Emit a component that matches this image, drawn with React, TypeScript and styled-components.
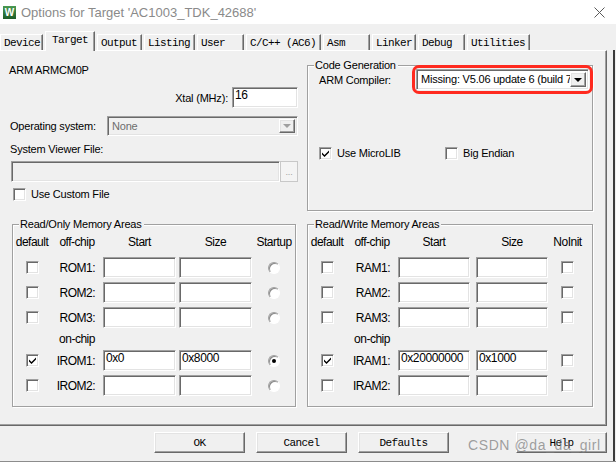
import React from 'react';
import styled, { createGlobalStyle } from 'styled-components';

type MemRow = { name: string; start?: string; size?: string; def?: boolean; flag?: boolean };

const TABS = [
  { label: 'Device', width: 43 },
  { label: 'Target', width: 50 },
  { label: 'Output', width: 45 },
  { label: 'Listing', width: 51 },
  { label: 'User', width: 47 },
  { label: 'C/C++ (AC6)', width: 75 },
  { label: 'Asm', width: 47 },
  { label: 'Linker', width: 44 },
  { label: 'Debug', width: 47 },
  { label: 'Utilities', width: 63 },
];
const ACTIVE_TAB = 1;

const ROM_OFF: MemRow[] = [{ name: 'ROM1' }, { name: 'ROM2' }, { name: 'ROM3' }];
const ROM_ON: MemRow[] = [
  { name: 'IROM1', start: '0x0', size: '0x8000', def: true, flag: true },
  { name: 'IROM2' },
];
const RAM_OFF: MemRow[] = [{ name: 'RAM1' }, { name: 'RAM2' }, { name: 'RAM3' }];
const RAM_ON: MemRow[] = [
  { name: 'IRAM1', start: '0x20000000', size: '0x1000', def: true },
  { name: 'IRAM2' },
];

const GlobalStyle = createGlobalStyle`
  html, body {
    margin: 0;
    padding: 0;
    background: #ffffff;
  }
`;

function CheckBox({ on }: { on?: boolean }) {
  return (
    <Box>
      {on && (
        <svg width='7' height='7' viewBox='0 0 7 7'>
          <path d='M0 2.5 L2.5 5 L7 0.5 L7 2.5 L2.5 7 L0 4.5 Z' fill='#000' />
        </svg>
      )}
    </Box>
  );
}

interface MemoryGroupProps {
  title: string;
  last: string;
  cols: string;
  fieldWidth: number;
  radio?: boolean;
  offChip: MemRow[];
  onChip: MemRow[];
}

function MemoryGroup({ title, last, cols, fieldWidth, radio, offChip, onChip }: MemoryGroupProps) {
  const renderRow = (row: MemRow) => (
    <React.Fragment key={row.name}>
      <Cell>
        <CheckBox on={row.def} />
      </Cell>
      <RowLabel>{row.name}:</RowLabel>
      <Field $w={fieldWidth}>{row.start}</Field>
      <Field $w={fieldWidth}>{row.size}</Field>
      <Cell>{radio ? <Radio $on={row.flag} /> : <CheckBox on={row.flag} />}</Cell>
    </React.Fragment>
  );

  return (
    <Group $h={183}>
      <Legend>{title}</Legend>
      <MemGrid $cols={cols}>
        <Head>default</Head>
        <Head>off-chip</Head>
        <Head $w={fieldWidth}>Start</Head>
        <Head $w={fieldWidth}>Size</Head>
        <Head>{last}</Head>
        {offChip.map(renderRow)}
        <span />
        <Head>on-chip</Head>
        <span />
        <span />
        <span />
        {onChip.map(renderRow)}
      </MemGrid>
    </Group>
  );
}

function App() {
  return (
    <>
      <GlobalStyle />
      <Window>
        <TitleBar>
          <AppIcon>W</AppIcon>
          <TitleText>Options for Target 'AC1003_TDK_42688'</TitleText>
          <CloseIcon width='11' height='11' viewBox='0 0 11 11'>
            <path d='M0.5 0.5 L10.5 10.5 M10.5 0.5 L0.5 10.5' stroke='#5a5a5a' strokeWidth='1' fill='none' />
          </CloseIcon>
        </TitleBar>

        <TabStrip>
          {TABS.map((tab, i) => (
            <Tab key={tab.label} $w={tab.width} $active={i === ACTIVE_TAB}>
              {tab.label}
            </Tab>
          ))}
        </TabStrip>

        <Body>
          <Pane>
            <TopSection>
              <LeftCol>
                <DeviceName>ARM ARMCM0P</DeviceName>
                <XtalRow>
                  <span>Xtal (MHz):</span>
                  <Field $w={66}>16</Field>
                </XtalRow>
                <OsRow>
                  <span>Operating system:</span>
                  <DropDown $w={191} $h={20} $disabled>
                    <DropValue>None</DropValue>
                    <DropArrow $disabled />
                  </DropDown>
                </OsRow>
                <FieldLabel>System Viewer File:</FieldLabel>
                <PathRow>
                  <Field $disabled $grow />
                  <BrowseButton>...</BrowseButton>
                </PathRow>
                <CheckRow $pad={4}>
                  <CheckBox />
                  <span>Use Custom File</span>
                </CheckRow>
              </LeftCol>

              <Group $h={146} $top={2}>
                <Legend>Code Generation</Legend>
                <CompilerRow>
                  <span>ARM Compiler:</span>
                  <Highlight>
                    <DropDown $w={173} $h={21}>
                      <DropValue>Missing: V5.06 update 6 (build 750)</DropValue>
                      <DropArrow />
                    </DropDown>
                  </Highlight>
                </CompilerRow>
                <OptionsRow>
                  <CheckRow>
                    <CheckBox on />
                    <span>Use MicroLIB</span>
                  </CheckRow>
                  <CheckRow>
                    <CheckBox />
                    <span>Big Endian</span>
                  </CheckRow>
                </OptionsRow>
              </Group>
            </TopSection>

            <MemSection>
              <MemoryGroup
                title='Read/Only Memory Areas'
                last='Startup'
                cols='38px 52px 76px 76px 38px'
                fieldWidth={73}
                radio
                offChip={ROM_OFF}
                onChip={ROM_ON}
              />
              <MemoryGroup
                title='Read/Write Memory Areas'
                last='NoInit'
                cols='38px 52px 78px 76px 31px'
                fieldWidth={72}
                offChip={RAM_OFF}
                onChip={RAM_ON}
              />
            </MemSection>
          </Pane>

          <ButtonRow>
            <DlgButton>OK</DlgButton>
            <DlgButton>Cancel</DlgButton>
            <DlgButton>Defaults</DlgButton>
            <DlgButton $push>Help</DlgButton>
          </ButtonRow>
        </Body>

        <Watermark>CSDN @da_da_girl</Watermark>
      </Window>
    </>
  );
}

export default App;

const sunken = `
  border: 1px solid;
  border-color: #a0a0a0 #ffffff #ffffff #a0a0a0;
  box-shadow: inset 1px 1px 0 #696969, inset -1px -1px 0 #e3e3e3;
`;

const raised = `
  border: 1px solid;
  border-color: #ffffff #696969 #696969 #ffffff;
  box-shadow: inset -1px -1px 0 #a0a0a0, inset 1px 1px 0 #e3e3e3;
`;

const Window = styled.div`
  position: relative;
  width: 616px;
  height: 462px;
  box-sizing: border-box;
  border-bottom: 1px solid #8c8c8c;
  background: #f0f0f0;
  display: flex;
  flex-direction: column;
  overflow: hidden;
  font-family: 'Liberation Sans', Arial, sans-serif;
  font-size: 11px;
  letter-spacing: -0.2px;
  color: #000;
`;

const TitleBar = styled.div`
  flex: none;
  height: 24px;
  background: #ffffff;
  display: flex;
  align-items: center;
  padding-left: 3px;
`;

const AppIcon = styled.span`
  width: 13px;
  height: 13px;
  background: linear-gradient(#4a9a52, #1d5c28);
  color: #ffffff;
  font: bold 10px 'Liberation Sans', sans-serif;
  letter-spacing: 0;
  display: flex;
  align-items: center;
  justify-content: center;
`;

const TitleText = styled.span`
  margin-left: 5px;
  font-size: 13px;
  letter-spacing: 0;
  color: #8a8a8a;
`;

const CloseIcon = styled.svg`
  margin-left: auto;
  margin-right: 11px;
`;

const TabStrip = styled.div`
  flex: none;
  height: 26px;
  display: flex;
  align-items: flex-end;
  gap: 2px;
`;

const Tab = styled.div<{ $w: number; $active?: boolean }>`
  position: relative;
  z-index: ${({ $active }) => ($active ? 1 : 0)};
  width: ${({ $w }) => $w}px;
  height: ${({ $active }) => ($active ? 20 : 16)}px;
  margin-bottom: ${({ $active }) => ($active ? -1 : 0)}px;
  box-sizing: border-box;
  padding: ${({ $active }) => ($active ? '2px 0 0 6px' : '2px 0 0 3px')};
  background: #f0f0f0;
  border-top: 1px solid #ffffff;
  border-left: 1px solid #ffffff;
  border-right: 1px solid #696969;
  box-shadow: inset -1px 0 0 #a0a0a0;
  font-family: 'Liberation Mono', 'Courier New', monospace;
  font-size: 11px;
  letter-spacing: -0.6px;
  line-height: 13px;
  white-space: nowrap;
`;

const Body = styled.div`
  flex: 1;
  width: 615px;
  box-sizing: border-box;
  border-right: 2px solid #3c3c3c;
  display: flex;
  flex-direction: column;
`;

const Pane = styled.div`
  width: 607px;
  height: 376px;
  box-sizing: border-box;
  border-top: 1px solid #ffffff;
  border-right: 1px solid #696969;
  border-bottom: 1px solid #696969;
  box-shadow: inset -1px -1px 0 #a0a0a0;
  padding: 12px 13px 0 9px;
`;

const TopSection = styled.div`
  display: grid;
  grid-template-columns: 289px 286px;
  column-gap: 9px;
  align-items: start;
`;

const LeftCol = styled.div`
  display: flex;
  flex-direction: column;
`;

const DeviceName = styled.div`
  line-height: 14px;
`;

const XtalRow = styled.div`
  margin-top: 10px;
  display: flex;
  justify-content: flex-end;
  align-items: center;
  gap: 4px;
`;

const OsRow = styled.div`
  margin-top: 8px;
  display: flex;
  align-items: center;
  justify-content: space-between;
  padding-left: 1px;
`;

const FieldLabel = styled.div`
  margin-top: 6px;
  padding-left: 1px;
  line-height: 14px;
`;

const PathRow = styled.div`
  margin-top: 5px;
  display: flex;
  padding-left: 2px;
`;

const CheckRow = styled.div<{ $pad?: number }>`
  margin-top: ${({ $pad }) => ($pad ? 5 : 0)}px;
  padding-left: ${({ $pad }) => $pad ?? 0}px;
  display: flex;
  align-items: center;
  gap: 5px;
  line-height: 14px;
`;

const Field = styled.div<{ $w?: number; $disabled?: boolean; $grow?: boolean }>`
  ${sunken}
  flex: ${({ $grow }) => ($grow ? 1 : 'none')};
  width: ${({ $w }) => ($w ? `${$w}px` : 'auto')};
  height: 21px;
  box-sizing: border-box;
  padding: 1px 2px 0 2px;
  background: ${({ $disabled }) => ($disabled ? '#f0f0f0' : '#ffffff')};
  font-size: 12px;
  letter-spacing: -0.4px;
  line-height: 13px;
  white-space: nowrap;
  overflow: hidden;
`;

const BrowseButton = styled.div`
  width: 18px;
  height: 21px;
  box-sizing: border-box;
  border: 1px solid #c8c8c8;
  background: #f4f4f4;
  color: #a0a0a0;
  font-size: 9px;
  display: flex;
  align-items: flex-end;
  justify-content: center;
  padding-bottom: 4px;
`;

const DropDown = styled.div<{ $w: number; $h: number; $disabled?: boolean }>`
  ${sunken}
  width: ${({ $w }) => $w}px;
  height: ${({ $h }) => $h}px;
  box-sizing: border-box;
  display: flex;
  padding: 2px;
  background: ${({ $disabled }) => ($disabled ? '#f0f0f0' : '#ffffff')};
  color: ${({ $disabled }) => ($disabled ? '#6d6d6d' : '#000000')};
`;

const DropValue = styled.span`
  flex: 1;
  padding-left: 2px;
  line-height: 15px;
  white-space: nowrap;
  overflow: hidden;
`;

const DropArrow = styled.span<{ $disabled?: boolean }>`
  ${raised}
  flex: none;
  width: 16px;
  box-sizing: border-box;
  background: #f0f0f0;
  display: flex;
  align-items: center;
  justify-content: center;

  &::after {
    content: '';
    border-left: 4px solid transparent;
    border-right: 4px solid transparent;
    border-top: 4px solid ${({ $disabled }) => ($disabled ? '#a0a0a0' : '#000000')};
  }
`;

const Group = styled.div<{ $h: number; $top?: number }>`
  margin-top: ${({ $top }) => $top ?? 0}px;
  height: ${({ $h }) => $h}px;
  box-sizing: border-box;
  border: 1px solid #a0a0a0;
  box-shadow: inset 1px 1px 0 #ffffff, 1px 1px 0 #ffffff;
  display: flex;
  flex-direction: column;
`;

const Legend = styled.div`
  align-self: flex-start;
  margin: -8px 0 0 6px;
  padding: 0 2px 0 1px;
  height: 14px;
  line-height: 14px;
  background: #f0f0f0;
`;

const CompilerRow = styled.div`
  margin-top: -3px;
  display: flex;
  align-items: center;
  justify-content: space-between;
  padding: 0 3px 0 11px;
`;

const Highlight = styled.span`
  display: flex;
  border-radius: 3px;
  outline: 3px solid #ff2a1f;
  outline-offset: 1px;
`;

const OptionsRow = styled.div`
  margin-top: 56px;
  padding-left: 11px;
  display: grid;
  grid-template-columns: 126px auto;
`;

const Box = styled.span`
  ${sunken}
  flex: none;
  width: 13px;
  height: 13px;
  box-sizing: border-box;
  background: #ffffff;
  display: flex;
  align-items: center;
  justify-content: center;
`;

const Radio = styled.span<{ $on?: boolean }>`
  width: 12px;
  height: 12px;
  box-sizing: border-box;
  border-radius: 50%;
  border: 1px solid;
  border-color: #a0a0a0 #ffffff #ffffff #a0a0a0;
  box-shadow: inset 1px 1px 0 #8a8a8a;
  background: #ffffff;
  display: flex;
  align-items: center;
  justify-content: center;

  &::after {
    content: '';
    width: 4px;
    height: 4px;
    border-radius: 50%;
    background: ${({ $on }) => ($on ? '#000000' : 'transparent')};
  }
`;

const MemSection = styled.div`
  margin-top: 13px;
  padding-left: 3px;
  display: grid;
  grid-template-columns: 284px 286px;
  column-gap: 11px;
`;

const MemGrid = styled.div<{ $cols: string }>`
  margin-top: 4px;
  display: grid;
  grid-template-columns: ${({ $cols }) => $cols};
  grid-template-rows: 18px 21px 21px 21px 14px 21px 21px;
  row-gap: 4px;
  font-size: 12px;
  letter-spacing: -0.5px;
`;

const Head = styled.div<{ $w?: number }>`
  width: ${({ $w }) => ($w ? `${$w}px` : 'auto')};
  line-height: 14px;
  text-align: center;
  white-space: nowrap;
`;

const Cell = styled.div`
  display: flex;
  align-items: center;
  justify-content: center;
`;

const RowLabel = styled.div`
  display: flex;
  align-items: center;
  justify-content: flex-end;
  padding-right: 8px;
`;

const ButtonRow = styled.div`
  width: 607px;
  box-sizing: border-box;
  margin-top: 6px;
  padding-left: 154px;
  display: flex;
  gap: 11px;
`;

const DlgButton = styled.div<{ $push?: boolean }>`
  ${raised}
  margin-left: ${({ $push }) => ($push ? 'auto' : '0')};
  width: 91px;
  height: 21px;
  box-sizing: border-box;
  background: #f0f0f0;
  display: flex;
  align-items: center;
  justify-content: center;
  font-family: 'Liberation Mono', 'Courier New', monospace;
  font-size: 11px;
  letter-spacing: -0.6px;
`;

const Watermark = styled.div`
  position: absolute;
  left: 468px;
  top: 437px;
  font-size: 14px;
  letter-spacing: 0.6px;
  line-height: 16px;
  color: rgba(120, 120, 120, 0.7);
  pointer-events: none;
`;
